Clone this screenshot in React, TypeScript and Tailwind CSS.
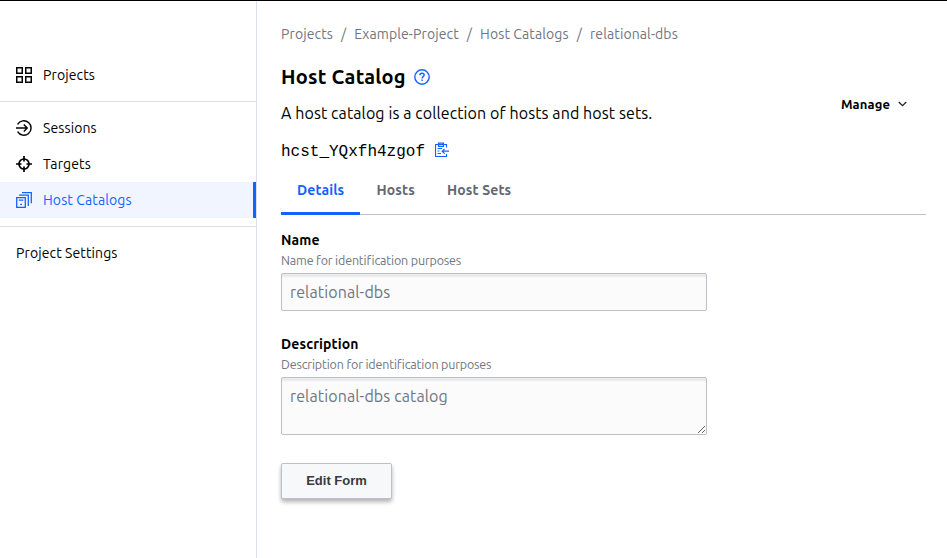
function GridIcon() {
  return (
    <svg width="16" height="16" viewBox="0 0 16 16" fill="none" stroke="black" strokeWidth="1.5">
      <path d="M0.75 0.75h5.5v5.5h-5.5zM9.75 0.75h5.5v5.5h-5.5zM0.75 9.75h5.5v5.5h-5.5zM9.75 9.75h5.5v5.5h-5.5z" />
    </svg>
  );
}

function EnterIcon() {
  return (
    <svg width="16" height="16" viewBox="0 0 16 16" fill="none" stroke="black" strokeWidth="1.4">
      <path d="M1.6 4.3A7.25 7.25 0 1 1 1.6 11.7M0 8h11M7.8 4.6L11.2 8 7.8 11.4" />
    </svg>
  );
}

function TargetIcon() {
  return (
    <svg width="16" height="16" viewBox="0 0 16 16" fill="none" stroke="black" strokeWidth="1.7">
      <circle cx="8" cy="8" r="5" />
      <path d="M8 0v5.5M8 10.5V16M0 8h5.5M10.5 8H16" />
    </svg>
  );
}

function CatalogIcon() {
  return (
    <svg width="16" height="16" viewBox="0 0 16 16" fill="none" stroke="#1563ff" strokeWidth="1.3">
      <path d="M0.7 5.7h8.6v9.6H0.7zM3 3.2h9.3v10.8M6 0.7h9.3v10.6M2.8 8.2h4.5M4.2 12.3h1.8" />
    </svg>
  );
}

function HelpIcon() {
  return (
    <svg width="16" height="16" viewBox="0 0 16 16" fill="none" stroke="#1563ff" strokeWidth="1.4">
      <circle cx="8" cy="8" r="7.2" />
      <path d="M5.8 6.3c0-1.3 1-2.1 2.2-2.1s2.2.8 2.2 1.9c0 1.5-2.1 1.6-2.1 3.3M8.1 10.6v1.5" />
    </svg>
  );
}

function CopyIcon() {
  return (
    <svg className="mb-0.5" width="16" height="16" viewBox="0 0 16 16" fill="none" stroke="#1563ff" strokeWidth="1.2">
      <path d="M11.5 5.6V2.5h-11v12h11v-2.6M3.5 2.5v1.8h5V2.5M3.5 2.5V1.2h5v1.3M2.6 6.5h4.6M2.6 9h1.8M2.6 11.5h3.4M14 9.2H7.2M9.6 6.8L7.2 9.2l2.4 2.4" />
    </svg>
  );
}

const navItem = "flex h-9 items-center gap-[11px] px-4";
const help = "flex h-5 items-center pt-0.5 text-[12.5px] tracking-[-0.16px] text-[#6f7682]";
const field =
  "mt-[3px] block w-[426px] rounded-[2px] border border-[#bac1cc] bg-[#fbfbfb] px-2 text-base tracking-[0.12px] text-[#6f7682] shadow-[inset_0_3px_1px_#ebebed] outline-none";

export default function App() {
  return (
    <div className="flex h-[558px] w-[947px] overflow-hidden border-t border-black bg-white font-['Ubuntu','Noto_Sans',sans-serif] text-sm tracking-[0.11px] text-black">
      <nav className="w-[257px] shrink-0 border-r border-[#dbdfea] pt-12">
        <div className="border-b border-[#dcdee3] py-2">
          <a className={navItem}><GridIcon />Projects</a>
        </div>
        <div className="border-b border-[#dcdee3] py-2">
          <a className={navItem}><EnterIcon />Sessions</a>
          <a className={navItem}><TargetIcon />Targets</a>
          <a className="flex h-9 items-center gap-[11px] border-r-[3px] border-[#1563ff] bg-[#f0f5ff] px-4 text-[#1563ff]">
            <CatalogIcon />Host Catalogs
          </a>
        </div>
        <div className="py-2">
          <a className={navItem}>Project Settings</a>
        </div>
      </nav>

      <main className="flex-1 pt-[23px] pr-[21px] pl-6">
        <div className="flex h-5 items-center gap-2 text-[#6f7682]">
          <span>Projects</span>
          <span>/</span>
          <span>Example-Project</span>
          <span>/</span>
          <span>Host Catalogs</span>
          <span>/</span>
          <span>relational-dbs</span>
        </div>

        <header className="flex justify-between">
          <div>
            <h1 className="mt-[19px] flex h-7 items-center gap-2 text-xl font-bold tracking-[0.22px]">
              Host Catalog<HelpIcon />
            </h1>
            <p className="mt-2.5 flex h-6 items-center text-base tracking-[0.095px]">
              A host catalog is a collection of hosts and host sets.
            </p>
            <div className="mt-3.5 flex h-6 items-center gap-2.5 font-['Liberation_Mono',monospace] text-base tracking-normal">
              <span className="pt-0.5">hcst_YQxfh4zgof</span><CopyIcon />
            </div>
          </div>
          <button className="mt-[50px] mr-[19px] flex h-5 items-center gap-2 text-[13px] font-bold tracking-[0.1px]">
            Manage
            <svg width="9" height="6" viewBox="0 0 9 6" fill="none" stroke="#222" strokeWidth="1.3">
              <path d="M0.7 1L4.5 4.6 8.3 1" />
            </svg>
          </button>
        </header>

        <div className="flex h-[52px] border-b border-[#bac1cc] font-bold tracking-[0.13px] text-[#626873]">
          <a className="h-[52px] w-[79px] border-b-[3px] border-[#1563ff] px-4 pt-[17px] text-[#1563ff]">Details</a>
          <a className="pt-[17px] pr-4 pl-[16.5px]">Hosts</a>
          <a className="px-4 pt-[17px]">Host Sets</a>
        </div>

        <label className="mt-[15px] flex h-5 items-center font-bold">Name</label>
        <p className={help}>Name for identification purposes</p>
        <input readOnly value="relational-dbs" className={`h-[38px] ${field}`} />

        <label className="mt-[23px] flex h-5 items-center font-bold">Description</label>
        <p className={help}>Description for identification purposes</p>
        <textarea readOnly value="relational-dbs catalog" className={`h-[58px] resize pt-1.5 ${field}`} />

        <button className="mt-7 flex h-9 w-[111px] items-center justify-center rounded-[2px] border border-[#bac1cc] bg-[#f7f8fa] font-['Liberation_Sans',sans-serif] text-[13px] font-bold tracking-normal text-[#373a42] shadow-[0_3px_4px_rgba(0,0,0,0.3)]">
          Edit Form
        </button>
      </main>
    </div>
  );
}
